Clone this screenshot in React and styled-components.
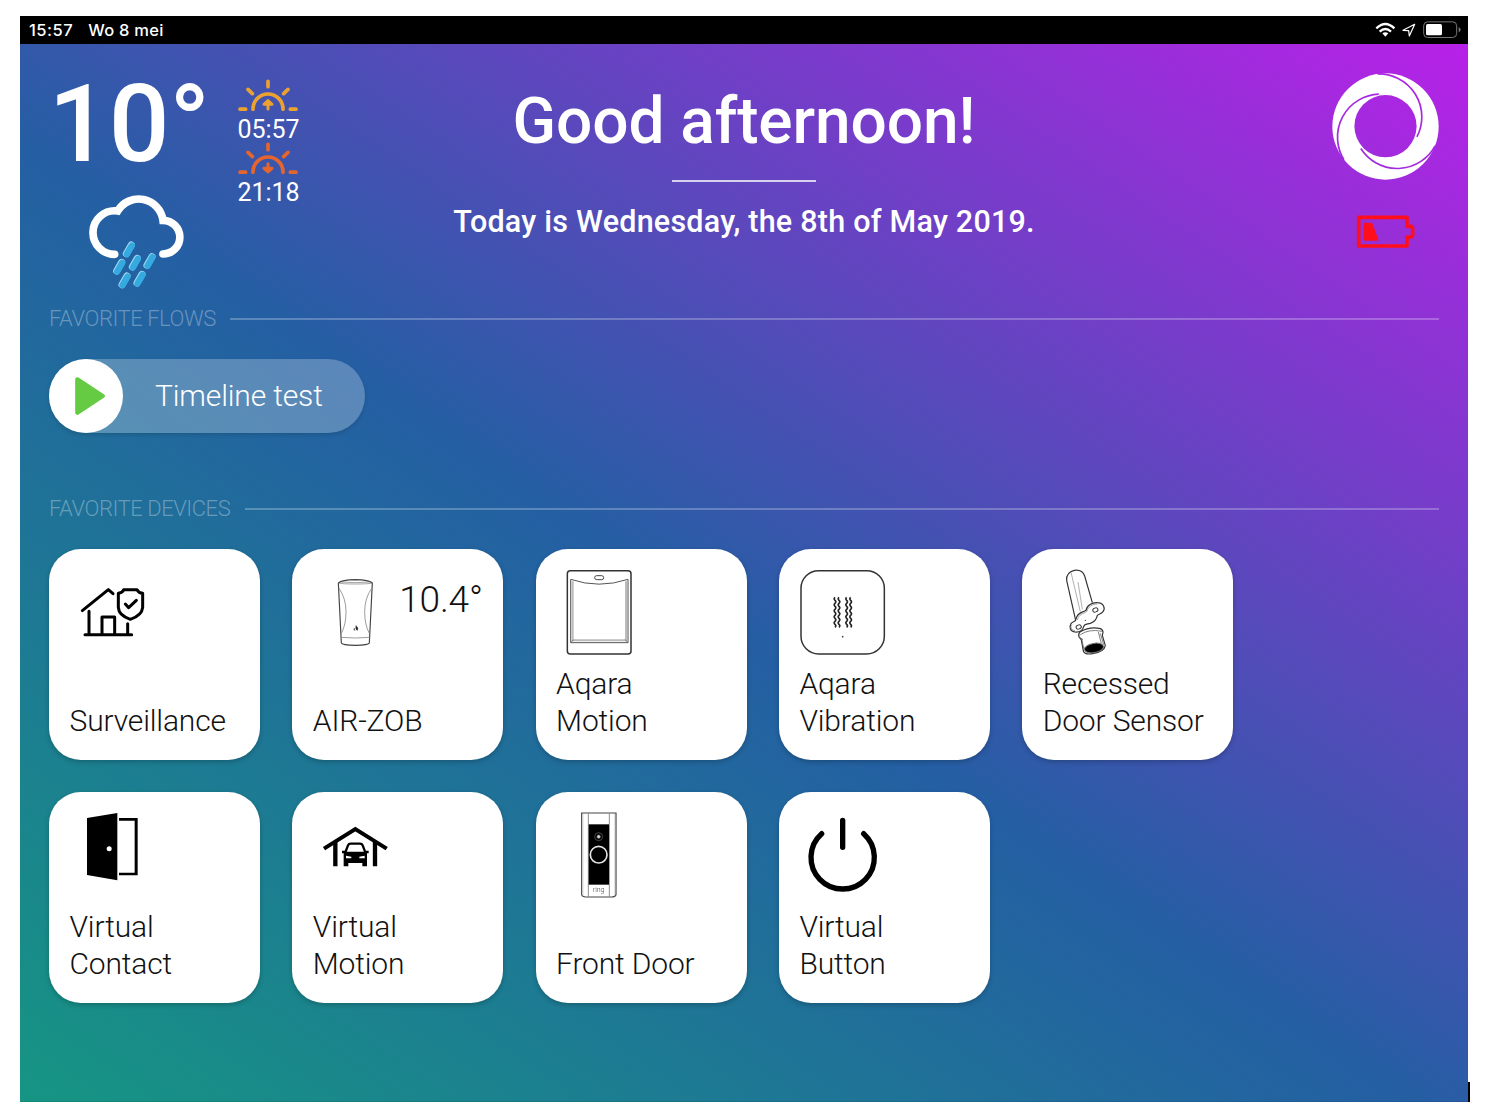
import React from "react";
import styled, { createGlobalStyle } from "styled-components";

const Global = createGlobalStyle`
  * { box-sizing: border-box; }
  body { margin: 0; background: #fff; font-family: Roboto, "Liberation Sans", sans-serif; }
`;

const Page = styled.div`
  display: flex;
  align-items: flex-end;
  width: 1486px;
  height: 1118px;
  padding: 16px 0 16px 20px;
  overflow: hidden;
`;
const Screen = styled.div`
  display: flex;
  flex-direction: column;
  width: 1448px;
  height: 1086px;
`;
const EdgeMark = styled.div`
  width: 2px;
  height: 20px;
  background: #000;
`;

const StatusBar = styled.div`
  display: flex;
  align-items: center;
  height: 28px;
  padding: 0 7px 0 9px;
  background: #000;
  color: #fff;
  font: 500 16.5px/28px Inter, sans-serif;
  letter-spacing: 0.25px;
`;
const StatusTime = styled.span`
  letter-spacing: 0.5px;
`;
const StatusDate = styled.span`
  margin-left: 15px;
  flex: 1;
`;
const StatusIcons = styled.div`
  display: flex;
  align-items: center;
  gap: 7px;
`;

const Dashboard = styled.main`
  flex: 1;
  padding: 29px 29px 0;
  background: linear-gradient(34.5deg, #169583 0%, #245fa3 46.5%, #b821e8 100%);
  box-shadow: inset 0 -1px 0 rgba(0, 0, 0, 0.08);
  color: #fff;
`;

const Header = styled.header`
  display: grid;
  grid-template-columns: 300px 1fr 300px;
  height: 217px;
`;
const Weather = styled.div`
  display: flex;
`;
const Conditions = styled.div`
  display: flex;
  flex-direction: column;
  width: 188.4px;
`;
const Temperature = styled.div`
  font-size: 107px;
  font-weight: 500;
  line-height: 100px;
  letter-spacing: -0.5px;
  margin: 2px 0 0 -0.5px;
  white-space: nowrap;
`;
const CloudWrap = styled.div`
  margin: 18px 0 0 39px;
`;
const SunTimes = styled.div`
  display: flex;
  flex-direction: column;
  width: 62px;
  padding-top: 6.1px;
`;
const SunTime = styled.div`
  height: 63.1px;
  font-size: 25px;
  line-height: 38px;
  text-align: center;
  white-space: nowrap;
  svg { display: block; }
`;
const Greeting = styled.div`
  display: flex;
  flex-direction: column;
  align-items: center;
  white-space: nowrap;
`;
const Title = styled.h1`
  margin: 13px 0 0;
  font-size: 64px;
  font-weight: 500;
  line-height: 72px;
  letter-spacing: -0.1px;
`;
const TitleRule = styled.div`
  width: 144px;
  height: 2px;
  margin-top: 22px;
  background: rgba(255, 255, 255, 0.75);
`;
const Subtitle = styled.p`
  margin: 22px 0 0;
  font-size: 30.5px;
  font-weight: 500;
  line-height: 36px;
  letter-spacing: 0.23px;
`;
const Aside = styled.div`
  display: flex;
  flex-direction: column;
  align-items: center;
  gap: 35px;
  justify-self: end;
  width: 107px;
`;

const Section = styled.section`
  height: ${(p) => p.$height || "auto"};
`;
const SectionHead = styled.h2`
  display: flex;
  align-items: center;
  gap: 14.5px;
  height: 58px;
  margin: 0;
  color: rgba(255, 255, 255, 0.33);
  font-size: 22px;
  font-weight: 300;
  letter-spacing: -0.45px;
  white-space: nowrap;
  &::after {
    content: "";
    flex: 1;
    height: 2px;
    background: rgba(255, 255, 255, 0.25);
  }
`;
const SectionTitle = styled.span`
  line-height: 26px;
`;
const FlowButton = styled.button`
  display: flex;
  align-items: center;
  width: 316px;
  height: 74px;
  margin: 11px 0 0;
  padding: 0;
  border: 0;
  border-radius: 37px;
  background: rgba(255, 255, 255, 0.25);
  box-shadow: 0 2px 4px rgba(0, 0, 0, 0.14);
  color: #fff;
  font: 300 30px/74px Roboto, sans-serif;
  letter-spacing: -0.15px;
`;
const PlayDisc = styled.span`
  display: grid;
  place-items: center;
  width: 74px;
  height: 74px;
  margin-right: 32px;
  padding-left: 7px;
  border-radius: 50%;
  background: #fff;
`;

const Grid = styled.div`
  display: grid;
  grid-template-columns: repeat(5, 211px);
  gap: 32.3px;
  margin-top: 11px;
`;
const Card = styled.article`
  display: flex;
  flex-direction: column;
  justify-content: space-between;
  height: 211px;
  padding-bottom: 20.7px;
  border-radius: 32px;
  background: #fff;
  color: #111;
  box-shadow: 0 2px 5px rgba(0, 0, 0, 0.22);
`;
const CardTop = styled.div`
  display: flex;
  height: 112px;
`;
const ReadingSlot = styled.div`
  width: 0;
  margin-left: -104px;
  padding-top: 26px;
`;
const Reading = styled.span`
  display: block;
  font-size: 37px;
  font-weight: 300;
  line-height: 50px;
  letter-spacing: -0.2px;
  white-space: nowrap;
`;
const Label = styled.div`
  padding-left: 20.5px;
  font-size: 30px;
  font-weight: 300;
  line-height: 36.7px;
  letter-spacing: -0.15px;
  white-space: pre-line;
`;

const WifiIcon = () => (
  <svg width="20" height="16" viewBox="225 67 60 48" fill="none" stroke="#fff" strokeWidth="7">
    <path d="M229 86Q256 60 283 86" />
    <path d="M239 96Q256 80 273 96" />
    <path d="M247 101Q256 94 265 101L256 111Z" fill="#fff" stroke="none" />
  </svg>
);
const LocationIcon = () => (
  <svg width="14" height="14" viewBox="308 71 42 42" fill="none" stroke="#fff" strokeWidth="3.6" strokeLinejoin="round">
    <path d="M346 75L311 93L328 94L330 110Z" />
  </svg>
);
const BatteryIcon = () => (
  <svg width="38" height="18" viewBox="369 65 114 54">
    <rect x="371" y="67.500" width="99" height="47" rx="12" fill="none" stroke="#777" strokeWidth="3" />
    <rect x="378" y="74" width="48" height="34" rx="5" fill="#fff" />
    <path d="M476 83Q482 86 482 91T476 99Z" fill="#777" />
  </svg>
);

const CloudIcon = () => (
  <svg width="97" height="97" viewBox="264 579 291 291" fill="none" strokeLinecap="round">
    <path
      d="M344 763A65 65 0 0 1 279 697A65 65 0 0 1 353 633A73.500 73.500 0 0 1 489 661A50.500 50.500 0 0 1 489 762"
      stroke="#fff"
      strokeWidth="23"
    />
    {[[395, 736], [366, 788], [413, 776], [457, 771], [382, 829], [427, 824]].map(([x, y]) => (
      <g key={x}>
        <path d={`M${x - 1} ${y - 1}l-15 26`} stroke="#a9dcf3" strokeWidth="21" />
        <path d={`M${x + 0.5} ${y + 0.5}l-15 26`} stroke="#35aae0" strokeWidth="19" />
      </g>
    ))}
  </svg>
);

const SunIcon = ({ color, set }) => (
  <svg width="62" height="32" viewBox="714 236 186 96" fill="none" stroke={color} strokeWidth="11" strokeLinecap="round">
    <path d="M807 243V259M747 267L760 280M867 267L854 280M723 326.500H740M874 326.500H891" />
    <path d="M762 327V326A45 45 0 0 1 852 326V327" />
    <path
      d={set ? "M807 301V320M807 326L795 315H819Z" : "M807 326V307M807 301L795 312H819Z"}
      strokeWidth="9"
      strokeLinejoin="round"
      fill={color}
    />
  </svg>
);

const HomeyLogo = () => (
  <svg width="107" height="107" viewBox="98 219 320 320">
    <mask id="swirl">
      <rect x="98" y="219" width="320" height="320" fill="#fff" />
      <circle cx="258" cy="378" r="93" fill="#000" />
      {[0, 120, 240].map((a) => (
        <path
          key={a}
          transform={`rotate(${a} 258 379)`}
          d="M234 221.500A129 129 0 0 1 352 410"
          fill="none"
          stroke="#000"
          strokeWidth="5"
        />
      ))}
    </mask>
    <circle cx="258" cy="379" r="159" fill="#fff" mask="url(#swirl)" />
  </svg>
);

const LowBattery = () => (
  <svg width="59" height="33.300" viewBox="171 645 177 100" fill="none" stroke="#ff0f1c" strokeWidth="11" strokeLinejoin="round">
    <path d="M179 652H324V679H334Q341 679 341 686V704Q341 711 334 711H324V738H179Z" />
    <path d="M197 671H217L235 719H197Z" fill="#ff0f1c" strokeWidth="6" />
  </svg>
);

const PlayIcon = () => (
  <svg width="30" height="38" viewBox="136 262 90 114">
    <path d="M143 269L219 319L143 369Z" fill="#65cb42" stroke="#65cb42" strokeWidth="13" strokeLinejoin="round" />
  </svg>
);

const Art = styled.svg`
  flex-shrink: 0;
`;
const DeviceArt = ({ x = 28, y = 27, children }) => (
  <Art width="211" height="112" viewBox={`${x} ${y} 633 336`} fill="none" stroke="#000">
    {children}
  </Art>
);

const Surveillance = () => (
  <DeviceArt>
    <g strokeWidth="9" strokeLinecap="round" strokeLinejoin="round">
      <path d="M128 212L206 149L220 161M148 214V283M136 284H276M187 282V231H225V282M264 251V282" />
      <path d="M252 149H292Q296 159 309 160V202Q307 226 272 238Q237 226 236 202V160Q249 159 252 149Z" />
      <path d="M257 192L267 203L290 181" />
    </g>
  </DeviceArt>
);
const AirZob = () => (
  <DeviceArt x={757}>
    <g stroke="#444" strokeWidth="3.500" strokeLinejoin="round">
      <path d="M896 129L905 309Q907 315 947 316Q987 315 989 309L998 129Q988 120 947 119Q906 120 896 129Z" />
      <path d="M896 129Q906 132 947 132T998 129M904 126Q947 130 990 126" stroke="#777" strokeWidth="2" />
      <path d="M898 145Q919 175 919 215T905 280M996 145Q975 175 975 215T989 280M904 292Q947 296 990 292" stroke="#888" strokeWidth="2.500" />
      <path d="M949 257Q958 265 953 271Q947 269 949 257ZM944 264Q941 270 946 272" fill="#111" strokeWidth="2" />
    </g>
  </DeviceArt>
);
const Motion = () => (
  <DeviceArt x={32}>
    <rect x="126" y="92" width="191" height="250" rx="9" stroke="#333" strokeWidth="4.500" />
    <rect x="208" y="107" width="27" height="12" rx="6" stroke="#444" strokeWidth="3" />
    <path d="M142 124V301H302V124" stroke="#bbb" strokeWidth="6" />
    <path d="M136 118V308H308V118Q221 147 136 118Z" stroke="#555" strokeWidth="3" />
    <path d="M136 308L145 299M308 308L299 299" stroke="#666" strokeWidth="2.500" />
  </DeviceArt>
);
const Vibration = () => (
  <DeviceArt x={762}>
    <rect x="828" y="92" width="250" height="250" rx="53" stroke="#333" strokeWidth="4.500" />
    {[930, 942, 965, 977].map((x) => (
      <path
        key={x}
        d={`M${x} 172q-5 4.500 0 9${"t0 9".repeat(9)}`}
        stroke="#222"
        strokeWidth="5"
      />
    ))}
    <circle cx="953" cy="290" r="2.500" fill="#444" stroke="none" />
  </DeviceArt>
);
const Recessed = () => (
  <DeviceArt x={35}>
    <g stroke="#333" strokeWidth="3.500" strokeLinejoin="round">
      <path d="M196 241L169 121Q167 97 192 91Q216 88 223 108L246 188" />
      <path d="M182 97L210 215M203 126L216 208" stroke="#888" strokeWidth="2" />
      <path
        d="M197 237C201 216 218 218 227 211C229 196 246 187 261 188C280 188 286 205 278 215C273 223 264 222 261 226C259 237 251 246 240 250C230 253 223 250 220 260C217 272 207 277 194 276C180 275 175 262 182 251C187 244 197 246 197 237Z"
        fill="#fff"
      />
      <path d="M201 240C205 222 219 222 230 214C233 200 246 192 261 192M194 272C182 270 179 260 185 254" stroke="#777" strokeWidth="2" />
      <ellipse cx="255" cy="210" rx="8" ry="6" strokeWidth="3" transform="rotate(-20 255 210)" />
      <ellipse cx="205" cy="261" rx="8" ry="6" strokeWidth="3" transform="rotate(-20 205 261)" />
      <circle cx="225" cy="241" r="2" fill="#333" stroke="none" />
      <path d="M210 275Q239 259 270 266Q278 269 278 277L276 286L285 317Q282 335 247 341Q223 345 219 333L213 300L206 291Q203 281 210 275Z" fill="#fff" />
      <path d="M210 284Q236 266 275 274M214 295L221 330M270 280L280 314M264 276L273 310M207 290Q212 296 218 299" stroke="#666" strokeWidth="2.500" />
      <ellipse cx="251" cy="324" rx="29" ry="14" fill="#000" stroke="#777" strokeWidth="3" transform="rotate(-10 251 324)" />
    </g>
  </DeviceArt>
);
const Door = () => (
  <DeviceArt y={22}>
    <path d="M142 100L233 85V287L142 271ZM238 100H294V272H238V264H285V108H238Z" fill="#000" stroke="none" />
    <circle cx="208.500" cy="192" r="7.500" fill="#fff" stroke="none" />
  </DeviceArt>
);
const Garage = () => (
  <DeviceArt x={757} y={22}>
    <path d="M853 192L947 133L1041 192" strokeWidth="12" />
    <path d="M887 172V245M1006 172V245" strokeWidth="13" />
    <path d="M917 203L925 182Q927 177 933 177H961Q967 177 969 182L977 203" strokeWidth="7" />
    <path d="M907 198H917V201H977V198H987V206H982V245H968V235H926V245H912V206H907Z" fill="#000" stroke="none" />
    <path d="M919 213L935 216V221H919ZM975 213L959 216V221H975Z" fill="#fff" stroke="none" />
  </DeviceArt>
);
const RingText = styled.text`
  font: 300 21px Roboto, sans-serif;
  letter-spacing: -0.2px;
  fill: #222;
  stroke: none;
  opacity: 0.9;
`;
const Doorbell = () => (
  <DeviceArt x={33} y={22}>
    <path d="M170 85H273V330Q270 337 260 337H182Q172 337 170 330Z" stroke="#444" strokeWidth="3.500" />
    <path d="M174 88V333M269 88V333" stroke="#ccc" strokeWidth="2" />
    <path d="M190 86V336M253 86V336" stroke="#777" strokeWidth="2.500" />
    <rect x="191" y="119" width="61" height="181" fill="#000" stroke="none" />
    <circle cx="221" cy="156" r="12" stroke="#555" strokeWidth="2.500" />
    <circle cx="221" cy="156" r="5" fill="#ddd" stroke="#888" strokeWidth="2" />
    <circle cx="221" cy="210" r="25" stroke="#e4e4e4" strokeWidth="5" />
    <RingText x="221" y="323" textAnchor="middle">ring</RingText>
  </DeviceArt>
);
const Power = () => (
  <DeviceArt x={762} y={22}>
    <path d="M953 107V188M890 147A95 95 0 1 0 1016 147" strokeWidth="16" strokeLinecap="round" />
  </DeviceArt>
);

const devices = [
  { name: "Surveillance", Picture: Surveillance },
  { name: "AIR-ZOB", Picture: AirZob, reading: "10.4°" },
  { name: "Aqara\nMotion", Picture: Motion },
  { name: "Aqara\nVibration", Picture: Vibration },
  { name: "Recessed\nDoor Sensor", Picture: Recessed },
  { name: "Virtual\nContact", Picture: Door },
  { name: "Virtual\nMotion", Picture: Garage },
  { name: "Front Door", Picture: Doorbell },
  { name: "Virtual\nButton", Picture: Power },
];

export default function App() {
  return (
    <Page>
      <Global />
      <Screen>
        <StatusBar>
          <StatusTime>15:57</StatusTime>
          <StatusDate>Wo 8 mei</StatusDate>
          <StatusIcons>
            <WifiIcon />
            <LocationIcon />
            <BatteryIcon />
          </StatusIcons>
        </StatusBar>
        <Dashboard>
          <Header>
            <Weather>
              <Conditions>
                <Temperature>10°</Temperature>
                <CloudWrap>
                  <CloudIcon />
                </CloudWrap>
              </Conditions>
              <SunTimes>
                <SunTime>
                  <SunIcon color="#eba230" />
                  05:57
                </SunTime>
                <SunTime>
                  <SunIcon color="#e5652f" set />
                  21:18
                </SunTime>
              </SunTimes>
            </Weather>
            <Greeting>
              <Title>Good afternoon!</Title>
              <TitleRule />
              <Subtitle>Today is Wednesday, the 8th of May 2019.</Subtitle>
            </Greeting>
            <Aside>
              <HomeyLogo />
              <LowBattery />
            </Aside>
          </Header>
          <Section $height="190px">
            <SectionHead>
              <SectionTitle>FAVORITE FLOWS</SectionTitle>
            </SectionHead>
            <FlowButton>
              <PlayDisc>
                <PlayIcon />
              </PlayDisc>
              Timeline test
            </FlowButton>
          </Section>
          <Section>
            <SectionHead>
              <SectionTitle>FAVORITE DEVICES</SectionTitle>
            </SectionHead>
            <Grid>
              {devices.map(({ name, Picture, reading }) => (
                <Card key={name}>
                  <CardTop>
                    <Picture />
                    {reading && (
                      <ReadingSlot>
                        <Reading>{reading}</Reading>
                      </ReadingSlot>
                    )}
                  </CardTop>
                  <Label>{name}</Label>
                </Card>
              ))}
            </Grid>
          </Section>
        </Dashboard>
      </Screen>
      <EdgeMark />
    </Page>
  );
}
